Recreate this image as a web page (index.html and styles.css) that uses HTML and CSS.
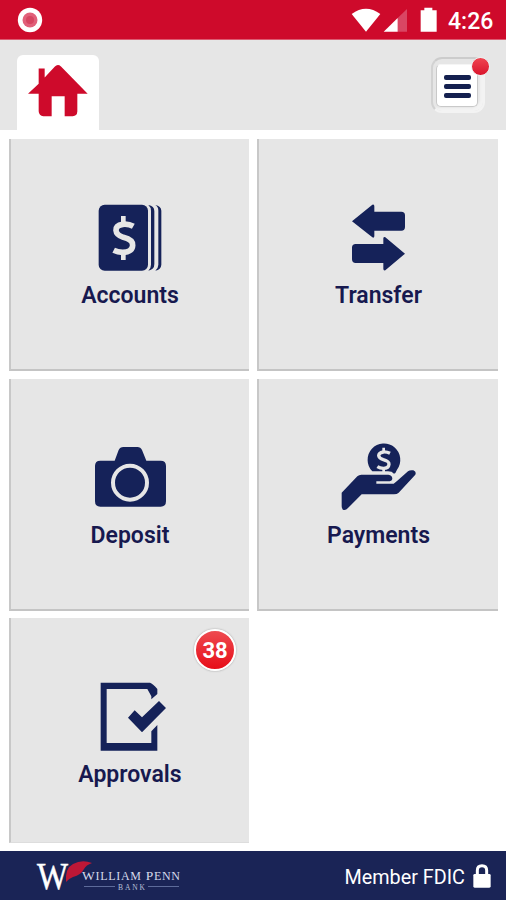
FILE: index.html
```html
<!DOCTYPE html>
<html lang="en">
<head>
<meta charset="utf-8">
<title>William Penn Bank</title>
<link rel="stylesheet" href="styles.css">
</head>
<body>
<div class="app">
  <div class="status">
    <svg class="record" viewBox="0 0 26 26"><circle cx="13" cy="13" r="12.2" fill="#fff"/><circle cx="13" cy="13" r="7.5" fill="#e1607a"/><circle cx="13" cy="13" r="4" fill="#d64561"/></svg>
    <svg class="signals" viewBox="0 0 300 90">
      <path d="M5 27Q48-5 91 27L48 80Z" fill="#fff"/>
      <path d="M171 12V80H143V39Z" fill="#d94663"/>
      <path d="M143 39V80H101Z" fill="#fff"/>
      <path d="M212 16H223V8H247V16H260V80H212Z" fill="#fff"/>
    </svg>
    <span class="time">4:26</span>
  </div>
  <header class="header">
    <div class="home">
      <svg viewBox="0 0 180 158"><path d="M0 89L32 59V13H50V40L80 8Q89-2 99 7L179 89H148V142Q147 156 134 156H110V96H71V156H46Q33 155 32 141V89Z"/></svg>
    </div>
    <div class="menu">
      <div class="menu-face"><i></i><i></i><i></i></div>
      <span class="dot"></span>
    </div>
  </header>
  <main class="grid">
    <section class="tile">
      <svg class="icon" viewBox="0 0 360 255">
        <rect x="86" y="44" width="148" height="198" rx="18"/>
        <path d="M256 45Q273 48 274 62V224Q273 239 256 242Q265 234 265 224V62Q265 50 256 45Z"/>
        <path d="M235 45Q253 47 253 64V222Q253 239 235 242Q243 235 243 224V62Q243 52 235 45Z"/>
        <g class="cut"><path d="M190 109Q176 101 158 103Q137 106 138 121Q139 135 160 142Q189 149 188 166Q187 186 158 187Q143 187 131 181" fill="none" stroke-width="17"/><path d="M160 78V104M160 185V210" stroke-width="14"/></g>
      </svg>
      <span class="label">Accounts</span>
    </section>
    <section class="tile right">
      <svg class="icon" viewBox="0 0 360 255">
        <path d="M96 94L157 44Q163 42 163 49V65H244Q255 65 255 76V111Q255 122 244 122H163V139Q162 145 157 142Z"/>
        <path d="M255 191L196 241Q190 243 190 236V219H107Q96 219 96 208V173Q96 162 107 162H190V145Q191 139 196 142Z"/>
      </svg>
      <span class="label">Transfer</span>
    </section>
    <section class="tile">
      <svg class="icon" viewBox="0 0 360 255">
        <path d="M91 92H134L146 60Q150 51 160 51H202Q212 51 216 60L229 92H272Q288 92 288 108V214Q288 230 272 230H91Q75 230 75 214V108Q75 92 91 92Z"/>
        <circle cx="180" cy="158" r="51" fill="none" stroke="#e6e6e6" stroke-width="12"/>
      </svg>
      <span class="label">Deposit</span>
    </section>
    <section class="tile right">
      <svg class="icon" viewBox="0 0 360 255">
        <path d="M157 124A49 49 0 1 1 231 119Q227 130 222 131Q216 124 204 124Z"/>
        <path d="M65 188L112 139Q117 134 124 134H205Q217 135 217 147Q216 153 209 154H169V161H221L231 153L264 124Q270 119 280 121Q290 125 286 134L236 188Q231 193 222 193H125L84 234Q77 242 69 239Q65 237 65 229Z"/>
        <g class="cut"><path d="M210 70Q200 65 190 66Q176 69 176 77Q177 85 190 89Q208 94 207 103Q206 115 190 115Q180 115 172 110" fill="none" stroke-width="10"/><path d="M191 53V68M191 115V126" stroke-width="8"/></g>
      </svg>
      <span class="label">Payments</span>
    </section>
    <section class="tile last">
      <svg class="icon" viewBox="0 0 360 255">
        <path d="M92 38H240Q248 40 262 57V72L244 88V79L232 57H110V219H244V184L262 165V242H92Z"/>
        <path d="M174 143L194 121L216 142L267 93L288 114L216 187Z"/>
      </svg>
      <span class="label">Approvals</span>
      <span class="badge">38</span>
    </section>
  </main>
  <footer class="footer">
    <svg class="brand" viewBox="0 0 150 40">
      <text x="1" y="32.5" class="w" textLength="31" lengthAdjust="spacingAndGlyphs">W</text>
      <path d="M30 26Q29 12 37 8Q46 3 56 7Q50 9 48 13Q45 19 37 21Q32 23 30 26Z" fill="#bd1736"/>
      <text x="46" y="24" class="name" textLength="98" lengthAdjust="spacing">W<tspan class="caps">ILLIAM</tspan> P<tspan class="caps">ENN</tspan></text>
      <path d="M48 30.5H79M112 30.5H143" stroke="#5d6b9a" stroke-width="1"/>
      <text x="82" y="33.5" class="bank" textLength="27" lengthAdjust="spacing">BANK</text>
    </svg>
    <div class="member"><span>Member FDIC</span>
      <svg class="lock" viewBox="0 0 54 72"><path d="M13 32V19Q13 5 27 5Q41 5 41 19V32" fill="none" stroke="#fff" stroke-width="9"/><rect x="1" y="30" width="52" height="41" rx="4" fill="#fff"/></svg>
    </div>
  </footer>
</div>
</body>
</html>
```
FILE: styles.css
```css
* { box-sizing: border-box; }
body { margin: 0; font-family: Roboto, sans-serif; background: #fff; }
svg { display: block; flex: none; }
.app { width: 506px; height: 900px; display: flex; flex-direction: column; overflow: hidden; }
.status { height: 40px; background: #ce0a2b; display: flex; align-items: center; padding-left: 17px; border-bottom: 1px solid #dc5b71; }
.record { width: 26px; height: 26px; }
.signals { width: 100px; height: 30px; margin-left: 307px; }
.time { color: #fff; font-size: 23px; font-weight: 500; line-height: 30px; margin-left: -2px; margin-top: 4px; white-space: nowrap; }
.header { height: 90px; background: #e6e6e6; display: flex; justify-content: space-between; padding: 15px 21px 0 17px; }
.home { width: 82px; height: 75px; background: #fff; border-radius: 6px 6px 0 0; padding: 9px 0 0 11px; }
.home svg { width: 60px; height: 53px; fill: #ce0a2b; }
.menu { position: relative; width: 54px; height: 56px; margin-top: 2px; border-radius: 11px; padding: 5px 3px; background: #e6e6e6; border: 2px solid #f3f3f3; border-top-color: #ccc; border-left-color: #d2d2d2; box-shadow: inset -3px -3px 2px #f3f3f3; }
.menu-face { width: 42px; height: 43px; background: #fff; border-radius: 5px; border: 1px solid #c9c9c9; border-top-color: #f5f5f5; display: flex; flex-direction: column; align-items: center; gap: 4px; padding-top: 10px; }
.menu-face i { display: block; width: 27px; height: 5px; border-radius: 2px; background: #14204f; }
.dot { position: absolute; top: -2px; right: -7px; width: 19px; height: 19px; border-radius: 50%; border: 1px solid #eee; background: linear-gradient(#f04450, #d9142c); }
.grid { height: 721px; padding: 9px 8px 8px 9px; display: grid; grid-template-columns: 240px 241px; grid-template-rows: 232px 232px 225px; column-gap: 8px; row-gap: 7.5px; }
.tile { position: relative; background: #e6e6e6; border-left: 2px solid #c8c8c8; border-bottom: 2px solid #c4c4c4; display: flex; flex-direction: column; align-items: center; padding-top: 51px; }
.tile .icon { width: 120px; height: 85px; fill: #152259; }
.right .icon { margin-left: 2px; }
.last { border-bottom-width: 1px; border-bottom-color: #ddd; padding-top: 52px; }
.cut path { stroke: #e6e6e6; }
.label { font-size: 23px; line-height: 26px; font-weight: 600; color: #17194f; margin-top: 8px; }
.last .label { margin-top: 7px; }
.badge { position: absolute; right: 13px; top: 11px; width: 42px; height: 42px; border-radius: 50%; border: 2px solid #fff; box-shadow: 0 0 2px #999; background: linear-gradient(#ee4a50, #e70d18); color: #fff; font-size: 22px; line-height: 39px; font-weight: 700; text-align: center; }
.footer { height: 49px; background: #1a2456; display: flex; justify-content: space-between; padding: 5px 15px 0 36px; }
.brand { width: 150px; height: 40px; fill: #fff; font-family: "Liberation Serif", serif; overflow: visible; }
.w { font-size: 38px; stroke: #fff; stroke-width: .5px; }
.name { font-size: 13.5px; fill: #d5daea; }
.caps { font-size: 12px; }
.bank { font-size: 7.5px; fill: #b9c0d8; }
.member { display: flex; height: 42px; align-items: center; gap: 8px; color: #fff; font-size: 19.8px; white-space: nowrap; }
.lock { width: 18px; height: 24px; margin-top: -2px; }
```
